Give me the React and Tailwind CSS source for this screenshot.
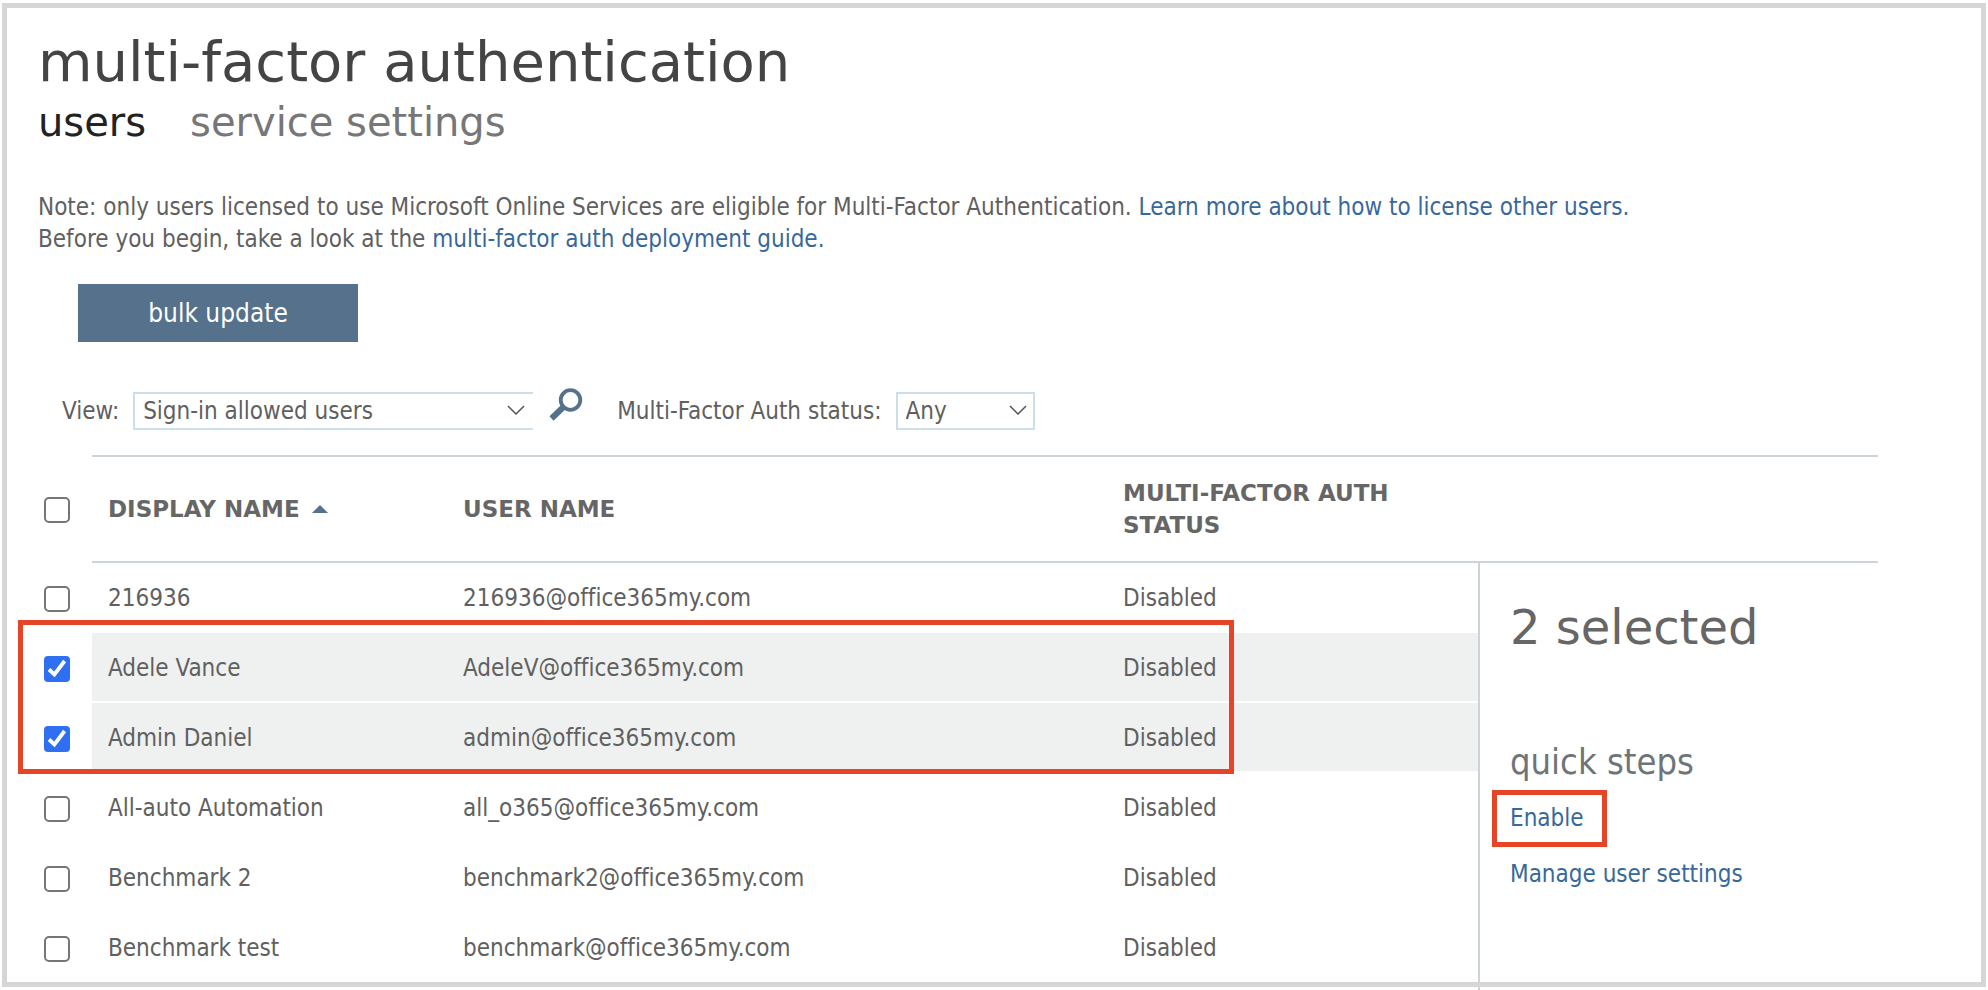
import { useState } from 'react'

const users = [
  { id: 1, name: '216936', email: '216936@office365my.com', status: 'Disabled' },
  { id: 2, name: 'Adele Vance', email: 'AdeleV@office365my.com', status: 'Disabled' },
  { id: 3, name: 'Admin Daniel', email: 'admin@office365my.com', status: 'Disabled' },
  { id: 4, name: 'All-auto Automation', email: 'all_o365@office365my.com', status: 'Disabled' },
  { id: 5, name: 'Benchmark 2', email: 'benchmark2@office365my.com', status: 'Disabled' },
  { id: 6, name: 'Benchmark test', email: 'benchmark@office365my.com', status: 'Disabled' },
]

function Checkbox({ label, checked, onChange }) {
  return (
    <span className="relative block w-[26px] h-[26px]">
      <input
        type="checkbox"
        aria-label={label}
        checked={checked}
        onChange={onChange}
        className="block w-[26px] h-[26px] appearance-none rounded-[5px] border-2 border-[#767676] bg-white checked:rounded-[4px] checked:border-[#2f6ff2] checked:bg-[#2f6ff2]"
      />
      {checked && (
        <svg viewBox="0 0 26 26" className="pointer-events-none absolute inset-0 w-[26px] h-[26px]" fill="none" stroke="#fff" strokeWidth="3.8">
          <path d="M5 13.5l5.4 5L20.6 5" />
        </svg>
      )}
    </span>
  )
}

function Chevron() {
  return (
    <svg viewBox="0 0 18 10" className="pointer-events-none absolute right-2 top-[13px] w-[18px] h-[10px]" fill="none" stroke="#555" strokeWidth="1.5">
      <path d="M1 1l8 8 8-8" />
    </svg>
  )
}

function SearchIcon() {
  return (
    <svg viewBox="0 0 34 34" className="w-[34px] h-[34px]" fill="none" stroke="#55718b">
      <circle cx="21.5" cy="12" r="9.8" strokeWidth="3.8" />
      <path d="M15 18.5L2.5 30.5" strokeWidth="6" />
    </svg>
  )
}

export default function App() {
  const [selected, setSelected] = useState([2, 3])

  const toggle = id => setSelected(prev => (prev.includes(id) ? prev.filter(x => x !== id) : [...prev, id]))
  const allSelected = selected.length === users.length

  return (
    <div className="relative flex flex-col min-h-screen bg-white text-[#606060] font-['DejaVu_Sans_Condensed','DejaVu_Sans',sans-serif] text-[24px] leading-8 [font-variant-ligatures:none]">
      <header className="px-[38px] pt-[26px] font-['DejaVu_Sans',sans-serif]">
        <h1 className="text-[56px] leading-[72px] text-[#444]">multi-factor authentication</h1>
        <nav className="flex gap-11 text-[40px] leading-12">
          <a href="#users" className="text-[#222]">users</a>
          <a href="#settings" className="text-[#777]">service settings</a>
        </nav>
      </header>

      <p className="px-[38px] pt-[45px]">
        Note: only users licensed to use Microsoft Online Services are eligible for Multi-Factor Authentication.{' '}
        <a href="#license" className="text-[#38689a]">Learn more about how to license other users.</a>
        <br />
        Before you begin, take a look at the <a href="#guide" className="text-[#38689a]">multi-factor auth deployment guide.</a>
      </p>

      <div className="px-[78px] pt-[29px]">
        <button className="w-[280px] h-[58px] bg-[#55718b] text-white text-[26px]">bulk update</button>
      </div>

      {/* Filters */}
      <div className="flex items-center px-[62px] pt-[50px]">
        <label htmlFor="view" className="mr-3.5">View:</label>
        <span className="relative w-[400px]">
          <select id="view" className="block w-full h-[38px] appearance-none border-2 border-r-0 border-[#cddeeb] bg-white pl-2">
            <option>Sign-in allowed users</option>
          </select>
          <Chevron />
        </span>
        <button aria-label="Search" className="-mt-3 ml-4 mr-[34px]">
          <SearchIcon />
        </button>
        <label htmlFor="status" className="mr-3.5">Multi-Factor Auth status:</label>
        <span className="relative w-[139px]">
          <select id="status" className="block w-full h-[38px] appearance-none border-2 border-[#cddeeb] bg-white pl-2">
            <option>Any</option>
          </select>
          <Chevron />
        </span>
      </div>

      {/* Users */}
      <main className="flex flex-1 pt-[25px] pr-[110px]">
        <div className="relative flex-1">
          <table className="w-full table-fixed border-separate border-spacing-0 text-left">
            <colgroup>
              <col className="w-[92px]" />
              <col className="w-[355px]" />
              <col className="w-[660px]" />
              <col />
            </colgroup>
            <thead className="font-['DejaVu_Sans',sans-serif] text-[23px] text-[#666]">
              <tr className="h-[108px]">
                <th className="pl-11 pt-0.5">
                  <Checkbox label="Select all" checked={allSelected} onChange={() => setSelected(allSelected ? [] : users.map(u => u.id))} />
                </th>
                <th className="border-y-2 border-[#ccd3d9] pl-4">
                  <span className="flex items-center gap-3">
                    DISPLAY NAME
                    <svg viewBox="0 0 16 8" className="w-4 h-2">
                      <path d="M8 0l8 8H0z" fill="#55718b" />
                    </svg>
                  </span>
                </th>
                <th className="border-y-2 border-[#ccd3d9] pl-4">USER NAME</th>
                <th className="border-y-2 border-[#ccd3d9] pl-4">
                  MULTI-FACTOR AUTH
                  <br />
                  STATUS
                </th>
              </tr>
            </thead>
            <tbody>
              {users.map(user => {
                const isSelected = selected.includes(user.id)
                const cell = `border-b-2 border-white pl-4 pt-0.5 ${isSelected ? 'bg-[#eff1f1]' : ''}`
                return (
                  <tr key={user.id} className="h-[70px]">
                    <td className="pl-11 pt-0.5">
                      <Checkbox label={user.name} checked={isSelected} onChange={() => toggle(user.id)} />
                    </td>
                    <td className={cell}>{user.name}</td>
                    <td className={cell}>{user.email}</td>
                    <td className={cell}>{user.status}</td>
                  </tr>
                )
              })}
            </tbody>
          </table>
          {/* Callout around the two selected rows */}
          <div className="pointer-events-none absolute left-[18px] right-[244px] top-[165px] h-[154px] border-5 border-[#e64426]" />
        </div>

        <div className="flex w-[400px] flex-col">
          <div className="h-[108px] border-y-2 border-[#ccd3d9]" />
          <aside className="flex-1 border-l-2 border-[#ccd3d9] pl-[30px] pt-[34px]">
            <h2 className="font-['DejaVu_Sans',sans-serif] text-[48px] leading-[60px] text-[#666]">{selected.length} selected</h2>
            <h3 className="pt-[81px] text-[36px] leading-12 text-[#6f7478]">quick steps</h3>
            <a href="#enable" className="-ml-[18px] mt-1 block w-fit border-5 border-[#e64426] pt-[7px] pb-2 pl-[13px] pr-[18px] text-[#38689a]">Enable</a>
            <a href="#manage" className="mt-[11px] block text-[#38689a]">Manage user settings</a>
          </aside>
        </div>
      </main>

      {/* Outer frame */}
      <div className="pointer-events-none absolute inset-x-[2px] inset-y-[3px] border-5 border-[#d6d6d6]" />
    </div>
  )
}
